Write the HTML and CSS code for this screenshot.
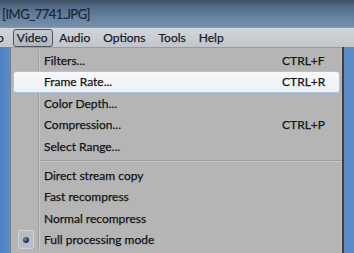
FILE: index.html
```html
<!DOCTYPE html>
<html lang="en">
<head>
    <meta charset="UTF-8">
    <title>Video menu</title>
    <link rel="stylesheet" href="styles.css">
</head>
<body>
    <div class="titlebar">[IMG_7741.JPG]</div>
    <div class="menubar">
        <span class="top cut">o</span>
        <span class="top open">Video</span>
        <span class="top">Audio</span>
        <span class="top">Options</span>
        <span class="top">Tools</span>
        <span class="top">Help</span>
    </div>
    <div class="desk">
        <div class="edge"></div>
        <div class="menu">
            <div class="item"><span class="gut"></span><span class="lbl">Filters...</span><span class="key">CTRL+F</span></div>
            <div class="item hot"><span class="gut"></span><span class="lbl">Frame Rate...</span><span class="key">CTRL+R</span></div>
            <div class="item"><span class="gut"></span><span class="lbl">Color Depth...</span><span class="key"></span></div>
            <div class="item"><span class="gut"></span><span class="lbl">Compression...</span><span class="key">CTRL+P</span></div>
            <div class="item"><span class="gut"></span><span class="lbl">Select Range...</span><span class="key"></span></div>
            <div class="sep"><span class="gut"></span><span class="line"></span></div>
            <div class="item"><span class="gut"></span><span class="lbl">Direct stream copy</span><span class="key"></span></div>
            <div class="item"><span class="gut"></span><span class="lbl">Fast recompress</span><span class="key"></span></div>
            <div class="item"><span class="gut"></span><span class="lbl">Normal recompress</span><span class="key"></span></div>
            <div class="item"><span class="gut"><span class="radio"><span class="dot"></span></span></span><span class="lbl">Full processing mode</span><span class="key"></span></div>
        </div>
        <div class="edge right"></div>
    </div>
</body>
</html>
```

FILE: styles.css
```css
html, body {
    margin: 0;
    padding: 0;
    width: 354px;
    height: 253px;
    overflow: hidden;
    font-family: Lato, "Open Sans", sans-serif;
    background: #5a8ac4;
}
.titlebar {
    height: 28px;
    box-sizing: border-box;
    padding: 6px 0 0 2px;
    font-size: 13px;
    letter-spacing: -0.5px;
    color: #1c2536;
    -webkit-text-stroke: 0.2px #1c2536;
    background: linear-gradient(#3f5066 0%, #56708c 30%, #6b87a3 75%, #7690aa 100%);
    border-bottom: 1px solid #8a98a8;
}
.menubar {
    height: 19px;
    display: flex;
    align-items: center;
    font-size: 12px;
    color: #1a2030;
    -webkit-text-stroke: 0.25px #1a2030;
    background: linear-gradient(#d2d5d9, #c2c6ca);
}
.top {
    padding: 0 6.5px;
    line-height: 16px;
}
.top.cut {
    margin-left: -3px;
    padding: 0 2px 0 0;
    margin-right: 7px;
}
.top.open {
    border: 1px solid #4e5460;
    border-radius: 3px;
    background: linear-gradient(#c6cacf, #b3b7bc);
    padding: 0 4px 0 3px;
    margin-right: 0;
}
.desk {
    display: flex;
    height: 206px;
}
.edge {
    width: 10px;
    background: linear-gradient(90deg, #4f82c2, #5c8dc8);
}
.edge.right {
    width: 10px;
    border-left: 2px solid #3c3f44;
    background: #5b8cc7;
}
.menu {
    width: 332px;
    background: #b5b5b5;
    border-left: 1px solid #7e7e7e;
    border-top: 1px solid #9c9c9c;
    padding-top: 1.5px;
    font-size: 12px;
    color: #141414;
    -webkit-text-stroke: 0.25px #141414;
}
.item, .sep {
    display: flex;
    align-items: center;
    height: 21.5px;
    position: relative;
}
.sep {
    height: 7.5px;
}
.gut {
    width: 27px;
    align-self: stretch;
    border-right: 1px solid #a2a2a2;
    box-shadow: 1px 0 0 #c6c6c6;
    display: flex;
    align-items: center;
    justify-content: center;
}
.lbl {
    flex: 1;
    padding-left: 5px;
}
.key {
    width: 60px;
}
.line {
    flex: 1;
    margin-left: 2px;
    height: 1px;
    background: #9e9e9e;
    border-bottom: 1px solid #c8c8c8;
}
.item.hot::before {
    content: "";
    position: absolute;
    left: 2px;
    right: 2px;
    top: 0;
    bottom: 0;
    border: 1px solid #a9c6e8;
    border-radius: 3px;
    background: linear-gradient(#f6f8fb, #eef1f5);
}
.item.hot > span {
    position: relative;
}
.item.hot .gut {
    border-right-color: transparent;
    box-shadow: none;
}
.radio {
    width: 16px;
    height: 19px;
    box-sizing: border-box;
    border: 1px solid #cbd3dc;
    border-radius: 2px;
    background: #b9bcc0;
    display: flex;
    align-items: center;
    justify-content: center;
    margin-left: 4px;
}
.dot {
    width: 6px;
    height: 6px;
    border-radius: 50%;
    background: radial-gradient(circle at 35% 35%, #7a84c0, #1e2150 70%);
}
```
